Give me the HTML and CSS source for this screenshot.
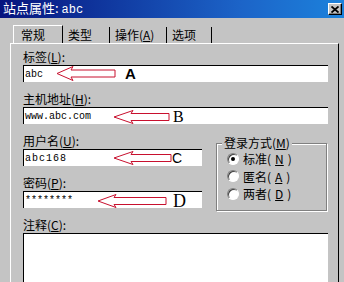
FILE: index.html
```html
<!DOCTYPE html>
<html lang="zh-CN">
<head>
    <meta charset="UTF-8">
    <meta name="viewport" content="width=device-width, initial-scale=1.0">
    <title>站点属性</title>
    <link rel="stylesheet" href="styles.css">
</head>
<body>
    <div class="window">
        <div class="titlebar">
            <span class="title">站点属性: <span class="mono">abc</span></span>
            <span class="close">
                <svg width="8" height="7" viewBox="0 0 8 7"><path d="M0.5 0.5 L7.5 6.5 M7.5 0.5 L0.5 6.5" stroke="#000" stroke-width="1.8"/></svg>
            </span>
        </div>

        <div class="tabs">
            <div class="tab active">常规</div>
            <div class="tab">类型</div>
            <div class="tab">操作(<u>A</u>)</div>
            <div class="tab">选项</div>
        </div>

        <div class="panel">
            <div class="field">
                <div class="label">标签(<u>L</u>):</div>
                <div class="box">
                    <span class="value">abc</span>
                    <svg class="arrow arrow-a" width="60" height="17" viewBox="0 0 60 17"><polygon points="1,8.5 17,1.5 15,5 59,5 59,12 15,12 17,15.5" fill="#fff" stroke="#c8102e" stroke-width="1"/></svg>
                    <span class="mark mark-a">A</span>
                </div>
            </div>

            <div class="field">
                <div class="label">主机地址(<u>H</u>):</div>
                <div class="box">
                    <span class="value">www.abc.com</span>
                    <svg class="arrow arrow-b" width="57" height="16" viewBox="0 0 57 16"><polygon points="1,8 20,1.5 18,4.5 56,4.5 56,11.5 18,11.5 20,14.5" fill="#fff" stroke="#c8102e" stroke-width="1"/></svg>
                    <span class="mark mark-b serif">B</span>
                </div>
            </div>

            <div class="split">
                <div class="col">
                    <div class="field">
                        <div class="label">用户名(<u>U</u>):</div>
                        <div class="box">
                            <span class="value wide">abc168</span>
                            <svg class="arrow arrow-c" width="59" height="16" viewBox="0 0 59 16"><polygon points="1,8 20,1.5 18,4.5 58,4.5 58,11.5 18,11.5 20,14.5" fill="#fff" stroke="#c8102e" stroke-width="1"/></svg>
                            <span class="mark mark-c">C</span>
                        </div>
                    </div>
                    <div class="field">
                        <div class="label">密码(<u>P</u>):</div>
                        <div class="box">
                            <span class="value">********</span>
                            <svg class="arrow arrow-d" width="70" height="16" viewBox="0 0 70 16"><polygon points="1,8 19,1.5 17,4.5 69,4.5 69,11.5 17,11.5 19,14.5" fill="#fff" stroke="#c8102e" stroke-width="1"/></svg>
                            <span class="mark mark-d serif">D</span>
                        </div>
                    </div>
                </div>

                <div class="group">
                    <div class="group-title">登录方式(<u>M</u>)</div>
                    <div class="option"><span class="radio checked"></span>标准(<u>N</u>)</div>
                    <div class="option"><span class="radio"></span>匿名(<u>A</u>)</div>
                    <div class="option"><span class="radio"></span>两者(<u>D</u>)</div>
                </div>
            </div>

            <div class="field">
                <div class="label">注释(<u>C</u>):</div>
                <div class="box memo"></div>
            </div>
        </div>
    </div>
</body>
</html>
```

FILE: styles.css
```css
/* Win98 style dialog */
body {
    margin: 0;
    padding: 0;
    width: 344px;
    height: 282px;
    overflow: hidden;
    background-color: #c4c4c4;
    font-family: 'Noto Sans CJK SC', 'Noto Sans', sans-serif;
    font-size: 12px;
    color: #000000;
}

.window {
    width: 344px;
    height: 282px;
    overflow: hidden;
}

u {
    text-decoration: underline;
}

.mono {
    font-family: 'Liberation Mono', monospace;
}

.serif {
    font-family: 'Liberation Serif', serif;
}

/* Title bar */
.titlebar {
    height: 18px;
    display: flex;
    align-items: center;
    justify-content: space-between;
    padding: 0 2px 0 3px;
    background: linear-gradient(to right, #06147e, #1c64c8 70%, #1c82dc);
    color: #FFFFFF;
}

.title {
    font-size: 13px;
    line-height: 16px;
}

.title .mono {
    font-size: 12px;
}

.close {
    width: 14px;
    height: 12px;
    box-sizing: border-box;
    display: flex;
    align-items: center;
    justify-content: center;
    background-color: #c4c4c4;
    border: 1px solid;
    border-color: #ffffff #000000 #000000 #ffffff;
    box-shadow: inset -1px -1px 0 #808080;
}

/* Tabs */
.tabs {
    height: 25px;
    display: flex;
    align-items: flex-end;
    padding-left: 13px;
}

.tab {
    height: 16px;
    line-height: 15px;
    padding-left: 5px;
    border-right: 1px solid #000000;
    box-sizing: border-box;
    white-space: nowrap;
}

.tab.active {
    width: 50px;
    height: 18px;
    line-height: 17px;
    padding-left: 7px;
    border-top: 1px solid #ffffff;
    border-left: 1px solid #ffffff;
}

.tab:nth-child(2) {
    width: 47px;
}

.tab:nth-child(3) {
    width: 57px;
}

.tab:nth-child(4) {
    width: 45px;
}

/* Panel */
.panel {
    margin-left: 10px;
    width: 329px;
    height: 260px;
    box-sizing: border-box;
    border-top: 1px solid #ffffff;
    border-left: 1px solid #ffffff;
    border-right: 1px solid #000000;
    padding: 6px 10px 0 12px;
}

.field {
    margin-bottom: 10px;
}

.label {
    height: 14px;
    line-height: 14px;
    margin-bottom: 1px;
}

.box {
    position: relative;
    height: 17px;
    box-sizing: border-box;
    background-color: #ffffff;
    border-top: 1px solid #000000;
    border-left: 1px solid #000000;
    display: flex;
    align-items: center;
    padding-left: 1px;
}

.value {
    font-family: 'Liberation Mono', monospace;
    font-size: 10px;
}

.value.wide {
    letter-spacing: 1px;
}

.memo {
    height: 60px;
}

/* Annotation arrows and letters */
.arrow {
    position: absolute;
    top: 0;
}

.arrow-a {
    left: 32px;
    top: -1px;
}

.arrow-b {
    left: 89px;
    top: 1px;
}

.arrow-c {
    left: 89px;
    top: 0;
}

.arrow-d {
    left: 73px;
    top: 1px;
}

.mark {
    position: absolute;
    line-height: 16px;
    top: 0;
}

.mark-a {
    left: 101px;
    font-family: 'Liberation Sans', sans-serif;
    font-weight: bold;
    font-size: 15px;
}

.mark-b {
    left: 149px;
    font-size: 16px;
    top: 1px;
}

.mark-c {
    left: 148px;
    font-family: 'Liberation Sans', sans-serif;
    font-size: 14px;
}

.mark-d {
    left: 149px;
    font-size: 18px;
    top: 1px;
}

/* Username / password and login group */
.split {
    display: flex;
}

.col {
    width: 179px;
    flex-shrink: 0;
}

.group {
    margin: 9px 0 0 14px;
    width: 111px;
    height: 68px;
    box-sizing: border-box;
    padding: 0 0 0 10px;
    border: 1px solid #808080;
    box-shadow: 1px 1px 0 #ffffff, inset 1px 1px 0 #ffffff;
}

.group-title {
    width: fit-content;
    margin: -8px 0 0 -5px;
    padding: 0 2px;
    line-height: 14px;
    background-color: #c4c4c4;
}

.option {
    height: 17.5px;
    display: flex;
    align-items: center;
    gap: 4px;
}

.option:first-of-type {
    margin-top: 2px;
}

.radio {
    width: 12px;
    height: 12px;
    box-sizing: border-box;
    border-radius: 50%;
    background-color: #ffffff;
    border: 1px solid;
    border-color: #808080 #ffffff #ffffff #808080;
    box-shadow: inset 1px 1px 0 #404040;
    display: flex;
    align-items: center;
    justify-content: center;
}

.radio.checked::after {
    content: "";
    width: 4px;
    height: 4px;
    border-radius: 50%;
    background-color: #000000;
}
```
